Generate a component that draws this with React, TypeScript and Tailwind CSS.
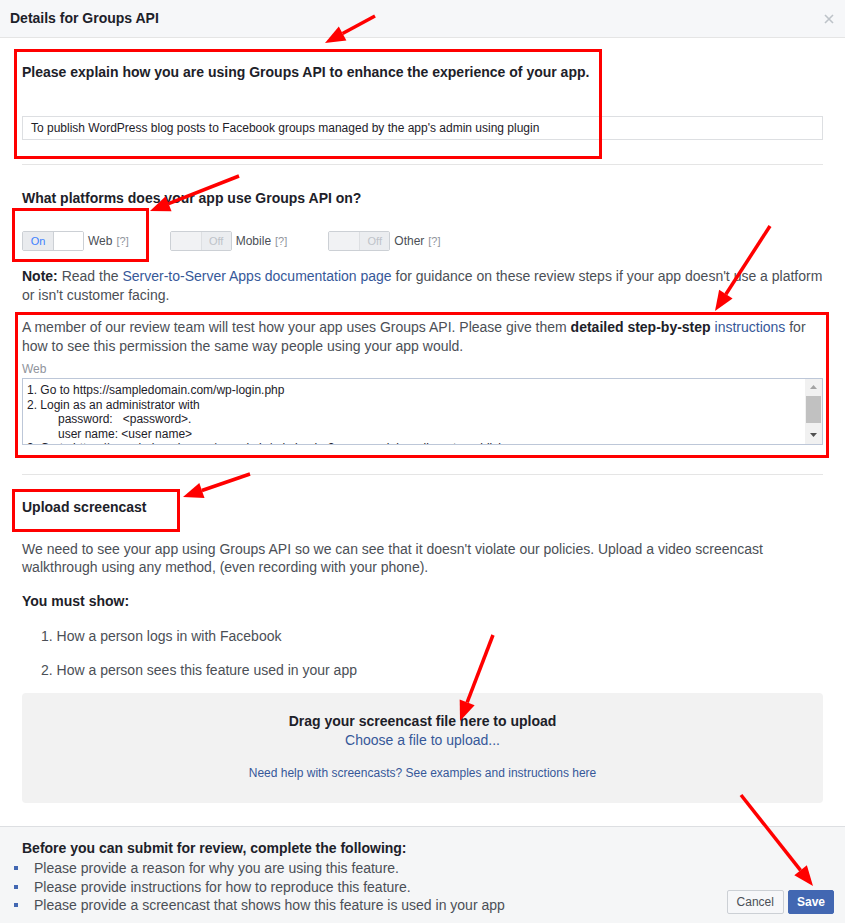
import React from "react";

const font = { fontFamily: '"Liberation Sans", Arial, Helvetica, sans-serif' };

type Arrow = { x1: number; y1: number; x2: number; y2: number };

const arrows: Arrow[] = [
  { x1: 375, y1: 16, x2: 325, y2: 43 },
  { x1: 239, y1: 176, x2: 150, y2: 211 },
  { x1: 770, y1: 226, x2: 715, y2: 311 },
  { x1: 250, y1: 474, x2: 183, y2: 497 },
  { x1: 493, y1: 635, x2: 460, y2: 721 },
  { x1: 741, y1: 795, x2: 813, y2: 886 },
];

function arrowHead(a: Arrow) {
  const dx = a.x2 - a.x1;
  const dy = a.y2 - a.y1;
  const len = Math.hypot(dx, dy);
  const ux = dx / len;
  const uy = dy / len;
  const hl = 20;
  const hw = 8;
  const bx = a.x2 - ux * hl;
  const by = a.y2 - uy * hl;
  return {
    pts: `${a.x2},${a.y2} ${bx - uy * hw},${by + ux * hw} ${bx + uy * hw},${by - ux * hw}`,
    bx,
    by,
  };
}

function Toggle({ on, label }: { on?: boolean; label: string }) {
  return (
    <div className="flex items-center">
      <div className="flex h-[20px] w-[62px] overflow-hidden rounded-[2px] border border-[#ccd0d5]">
        {on ? (
          <>
            <div className="flex w-[31px] items-center justify-center border-r border-[#ccd0d5] bg-[#e9ebee] text-[11px] text-[#4080ff]">
              On
            </div>
            <div className="flex-1 bg-white" />
          </>
        ) : (
          <>
            <div className="w-[31px] border-r border-[#dddfe2] bg-[#f1f2f4]" />
            <div className="flex flex-1 items-center justify-center bg-[#ebedf0] text-[11px] text-[#bec3c9]">
              Off
            </div>
          </>
        )}
      </div>
      <span className="ml-[4px] text-[12px] text-[#4b4f56]">{label}</span>
      <span className="ml-[4px] text-[11px] text-[#90949c]">[?]</span>
    </div>
  );
}

export default function App() {
  return (
    <div
      className="relative flex h-[923px] w-[845px] flex-col overflow-hidden bg-white text-[14px] text-[#4b4f56]"
      style={font}
    >
      {/* Header */}
      <div className="flex h-[38px] shrink-0 items-center justify-between border-b border-[#e5e5e5] bg-[#f6f7f9] pl-[10px] pr-[11px]">
        <span className="text-[14px] font-bold text-[#1d2129]">Details for Groups API</span>
        <svg width="10" height="10" viewBox="0 0 10 10">
          <path d="M1 1L9 9M9 1L1 9" stroke="#bec3c9" strokeWidth="1.6" />
        </svg>
      </div>

      {/* Body */}
      <div className="flex-1 px-[22px]">
        <div className="mt-[25px] text-[14px] font-bold leading-[18px] text-[#1d2129]">
          Please explain how you are using Groups API to enhance the experience of your app.
        </div>
        <div className="mt-[35px] flex h-[24px] items-center border border-[#dddfe2] px-[8px] text-[12px] text-[#1d2129]">
          To publish WordPress blog posts to Facebook groups managed by the app's admin using plugin
        </div>
        <div className="mt-[24px] border-t border-[#e5e5e5]" />

        <div className="mt-[24px] text-[14px] font-bold leading-[18px] text-[#1d2129]">
          What platforms does your app use Groups API on?
        </div>
        <div className="mt-[24px] flex items-center gap-[41px]">
          <Toggle on label="Web" />
          <Toggle label="Mobile" />
          <Toggle label="Other" />
        </div>

        <p className="mt-[16px] leading-[19px]">
          <span className="font-bold text-[#1d2129]">Note:</span> Read the{" "}
          <span className="text-[#365899]">Server-to-Server Apps documentation page</span> for guidance on
          these review steps if your app doesn't use a platform or isn't customer facing.
        </p>

        <p className="mt-[13px] leading-[19px]">
          A member of our review team will test how your app uses Groups API. Please give them{" "}
          <span className="font-bold text-[#1d2129]">detailed step-by-step</span>{" "}
          <span className="text-[#365899]">instructions</span> for how to see this permission the same way
          people using your app would.
        </p>
        <div className="mt-[5px] text-[12px] leading-[16px] text-[#90949c]">Web</div>
        <div className="mt-[1px] flex h-[67px] border border-[#bdc7d8] text-[12px] leading-[14.5px] text-[#1d2129]">
          <div className="flex-1 overflow-hidden whitespace-nowrap pl-[4px] pt-[4px]">
            <div>1. Go to https://sampledomain.com/wp-login.php</div>
            <div>2. Login as an administrator with</div>
            <div className="pl-[31px]">password:&nbsp;&nbsp;&nbsp;&lt;password&gt;.</div>
            <div className="pl-[31px]">user name: &lt;user name&gt;</div>
            <div>3. Go to https://sampledomain.com/wp-admin/admin.php?page=social-media-auto-publish-manage</div>
          </div>
          <div className="flex w-[17px] flex-col items-center bg-[#f1f1f1]">
            <svg width="7" height="4" viewBox="0 0 7 4" className="mt-[6px]">
              <path d="M3.5 0L7 4H0Z" fill="#a3a3a3" />
            </svg>
            <div className="mt-[7px] h-[27px] w-[15px] bg-[#c1c1c1]" />
            <svg width="7" height="4" viewBox="0 0 7 4" className="mt-[10px]">
              <path d="M0 0H7L3.5 4Z" fill="#505050" />
            </svg>
          </div>
        </div>
        <div className="mt-[29px] border-t border-[#e5e5e5]" />

        <div className="mt-[23px] text-[14px] font-bold leading-[18px] text-[#1d2129]">Upload screencast</div>
        <p className="mt-[24px] leading-[18px]">
          We need to see your app using Groups API so we can see that it doesn't violate our policies. Upload a
          video screencast walkthrough using any method, (even recording with your phone).
        </p>
        <div className="mt-[16px] font-bold leading-[18px] text-[#1d2129]">You must show:</div>
        <ol className="mt-[17px] pl-[19px] leading-[18px]">
          <li>1. How a person logs in with Facebook</li>
          <li className="mt-[16px]">2. How a person sees this feature used in your app</li>
        </ol>

        <div className="mt-[14px] flex h-[110px] flex-col items-center rounded-[4px] bg-[#f2f2f2] pt-[19px]">
          <div className="font-bold leading-[18px] text-[#1d2129]">Drag your screencast file here to upload</div>
          <div className="mt-[1px] leading-[18px] text-[#365899]">Choose a file to upload...</div>
          <div className="mt-[16px] text-[12px] leading-[16px] text-[#365899]">
            Need help with screencasts? See examples and instructions here
          </div>
        </div>
      </div>

      {/* Footer */}
      <div className="flex h-[97px] shrink-0 items-end justify-between border-t border-[#dddfe2] bg-[#f5f6f7] pb-[9px] pl-[22px] pr-[11px]">
        <div className="self-start pt-[12px]">
          <div className="font-bold leading-[18px] text-[#1d2129]">
            Before you can submit for review, complete the following:
          </div>
          <ul className="mt-[2px] -ml-[8px] leading-[18.5px]">
            {[
              "Please provide a reason for why you are using this feature.",
              "Please provide instructions for how to reproduce this feature.",
              "Please provide a screencast that shows how this feature is used in your app",
            ].map((t) => (
              <li key={t} className="flex items-center">
                <span className="mr-[16px] h-[4px] w-[4px] bg-[#4267b2]" />
                {t}
              </li>
            ))}
          </ul>
        </div>
        <div className="flex gap-[4px]">
          <button className="h-[24px] rounded-[2px] border border-[#ccd0d5] bg-[#f6f7f9] px-[9px] text-[12px] text-[#4b4f56]">
            Cancel
          </button>
          <button className="h-[24px] rounded-[2px] border border-[#4267b2] bg-[#4267b2] px-[8px] text-[12px] font-bold text-white">
            Save
          </button>
        </div>
      </div>

      {/* Annotations */}
      <svg className="pointer-events-none absolute left-0 top-0" width="845" height="923">
        <rect x="15.5" y="50.5" width="585" height="107" fill="none" stroke="#ff0000" strokeWidth="3" />
        <rect x="13.5" y="209.5" width="134" height="51" fill="none" stroke="#ff0000" strokeWidth="3" />
        <rect x="16.5" y="313.5" width="811" height="143" fill="none" stroke="#ff0000" strokeWidth="3" />
        <rect x="13.5" y="490.5" width="165" height="40" fill="none" stroke="#ff0000" strokeWidth="3" />
        {arrows.map((a, i) => {
          const h = arrowHead(a);
          return (
            <g key={i}>
              <line x1={a.x1} y1={a.y1} x2={h.bx} y2={h.by} stroke="#ff0000" strokeWidth="3.5" />
              <polygon points={h.pts} fill="#ff0000" />
            </g>
          );
        })}
      </svg>
    </div>
  );
}
